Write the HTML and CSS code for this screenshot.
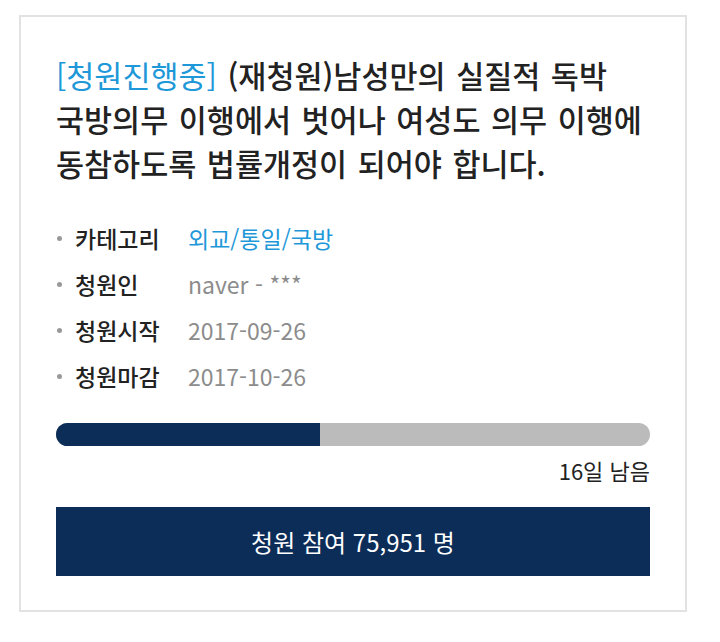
FILE: index.html
```html
<!DOCTYPE html>
<html lang="ko">
<head>
<meta charset="utf-8">
<link rel="stylesheet" href="styles.css">
</head>
<body>
<div class="card">
  <h1 class="title"><span class="status">[청원진행중]</span> (재청원)남성만의 실질적 독박 국방의무 이행에서 벗어나 여성도 의무 이행에 동참하도록 법률개정이 되어야 합니다.</h1>
  <ul class="meta">
    <li><span class="label">카테고리</span><span class="value link">외교/통일/국방</span></li>
    <li><span class="label">청원인</span><span class="value">naver - ***</span></li>
    <li><span class="label">청원시작</span><span class="value">2017-09-26</span></li>
    <li><span class="label">청원마감</span><span class="value">2017-10-26</span></li>
  </ul>
  <div class="progress"><div class="fill" style="width:44.4%"></div></div>
  <div class="remain">16일 남음</div>
  <div class="btn">청원 참여 75,951 명</div>
</div>
</body>
</html>
```
FILE: styles.css
```css
html, body {
  margin: 0;
  padding: 0;
  background: #fff;
}
body {
  padding: 15px 33px 0 19px;
  font-family: "Noto Sans CJK KR", "Noto Sans", sans-serif;
}
.card {
  border: 2px solid #e2e2e2;
  padding: 36px 35px 34px 35px;
  width: 594px;
}
.title {
  margin: 0;
  font-size: 30.5px;
  line-height: 44px;
  font-weight: 500;
  color: #222;
  word-spacing: 2px;
  word-break: keep-all;
}
.status {
  color: #1e98d8;
  font-weight: 400;
}
.meta {
  list-style: none;
  margin: 30px 0 0 0;
  padding: 0;
}
.meta li {
  display: flex;
  align-items: center;
  height: 46px;
  font-size: 23px;
}
.meta li::before {
  content: "";
  flex: none;
  width: 5px;
  height: 5px;
  border-radius: 50%;
  background: #999;
  margin: 0 13px 0 1px;
}
.label {
  width: 113px;
  color: #222;
  font-weight: 500;
}
.value {
  color: #8c8c8c;
}
.value.link {
  color: #1e98d8;
}
.progress {
  margin-top: 24px;
  height: 23px;
  border-radius: 12px;
  background: #bbbbbb;
  overflow: hidden;
}
.fill {
  height: 100%;
  background: #0b2d58;
}
.remain {
  text-align: right;
  font-size: 22px;
  color: #222;
  margin-top: 9px;
  line-height: 30px;
}
.btn {
  margin-top: 22px;
  height: 69px;
  background: #0b2d58;
  color: #fff;
  font-size: 24px;
  display: flex;
  align-items: center;
  justify-content: center;
}
```
